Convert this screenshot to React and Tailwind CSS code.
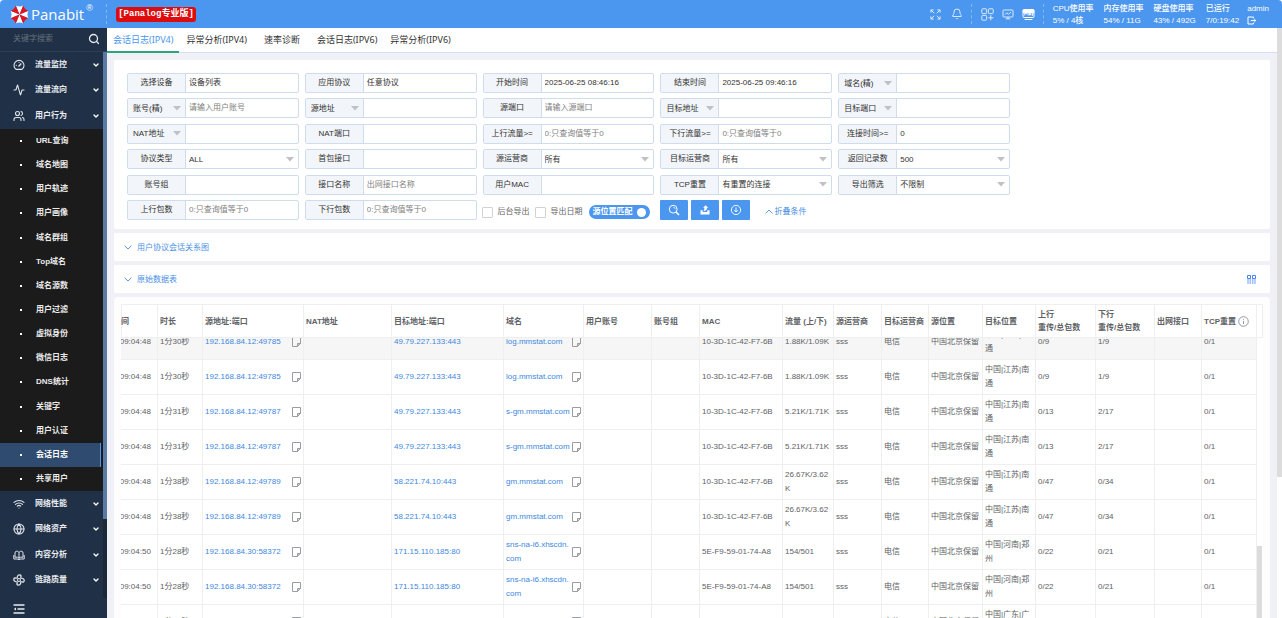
import React from "react";
import { ChevronDown, Activity, Users, Wifi, Globe, Search, Bell } from "lucide-react";

function GaugeIcon({ className }) {
  return (
    <svg viewBox="0 0 12 12" className={className} fill="none" stroke="currentColor" strokeWidth="1.1">
      <path d="M3 10.4A5 5 0 1 1 9 10.4z" strokeLinejoin="round" />
      <path d="M5.5 7.5 8.3 4.5" strokeWidth="1.4" />
      <path d="M2.8 6.4h.9M6 3v.8" />
    </svg>
  );
}

function BookIcon({ className }) {
  return (
    <svg viewBox="0 0 12 12" className={className} fill="none" stroke="currentColor" strokeWidth="1">
      <path d="M2 8.2V4a1.8 1.8 0 0 1 1.8-1.8c1.2 0 2.2.6 2.2 1.6 0-1 1-1.6 2.2-1.6A1.8 1.8 0 0 1 10 4v4.2" />
      <path d="M6 3.8v6M.8 6v4h3.4l1.8.6 1.8-.6h3.4V6M2 8.2h2.4L6 9l1.6-.8H10" />
    </svg>
  );
}

function LinkQualityIcon({ className }) {
  return (
    <svg viewBox="-6 -6 12 12" className={className} fill="none" stroke="currentColor" strokeWidth="1">
      <circle r="1.5" />
      {[0, 90, 180, 270].map((a) => (
        <path key={a} transform={`rotate(${a})`} d="M-1.8-1.2C-2.2-3-1.4-5 .4-5.2 2.2-5.3 2.6-3.6 1.4-2.6" strokeWidth="1.3" />
      ))}
    </svg>
  );
}

const groupsTop = [
  { name: "流量监控", Icon: GaugeIcon },
  { name: "流量流向", Icon: Activity },
  { name: "用户行为", Icon: Users },
];
const groupsBottom = [
  { name: "网络性能", Icon: Wifi },
  { name: "网络资产", Icon: Globe },
  { name: "内容分析", Icon: BookIcon },
  { name: "链路质量", Icon: LinkQualityIcon },
];
const subItems = [
  "URL查询", "域名地图", "用户轨迹", "用户画像", "域名群组", "Top域名", "域名源数", "用户过滤",
  "虚拟身份", "微信日志", "DNS统计", "关键字", "用户认证", "会话日志", "共享用户",
];
const tabs = ["会话日志(IPV4)", "异常分析(IPV4)", "速率诊断", "会话日志(IPV6)", "异常分析(IPV6)"];
const stats = [
  ["CPU使用率", "5% / 4核"],
  ["内存使用率", "54% / 11G"],
  ["硬盘使用率", "43% / 492G"],
  ["已运行", "7/0:19:42"],
];
const fields = [
  { label: "选择设备", value: "设备列表" },
  { label: "应用协议", value: "任意协议" },
  { label: "开始时间", value: "2025-06-25 08:46:16" },
  { label: "结束时间", value: "2025-06-25 09:46:16" },
  { label: "域名(精)", pick: true },
  { label: "账号(精)", pick: true, hint: "请输入用户账号" },
  { label: "源地址", pick: true },
  { label: "源端口", hint: "请输入源端口" },
  { label: "目标地址", pick: true },
  { label: "目标端口", pick: true },
  { label: "NAT地址", pick: true },
  { label: "NAT端口" },
  { label: "上行流量>=", hint: "0:只查询值等于0" },
  { label: "下行流量>=", hint: "0:只查询值等于0" },
  { label: "连接时间>=", value: "0" },
  { label: "协议类型", option: "ALL" },
  { label: "首包接口" },
  { label: "源运营商", option: "所有" },
  { label: "目标运营商", option: "所有" },
  { label: "返回记录数", option: "500" },
  { label: "账号组" },
  { label: "接口名称", hint: "出网接口名称" },
  { label: "用户MAC" },
  { label: "TCP重置", option: "有重置的连接" },
  { label: "导出筛选", option: "不限制" },
  { label: "上行包数", hint: "0:只查询值等于0" },
  { label: "下行包数", hint: "0:只查询值等于0" },
];
const columns = [
  { name: "开始时间", w: "w-[63px]" },
  { name: "时长", w: "w-[45px]" },
  { name: "源地址:端口", w: "w-[101px]" },
  { name: "NAT地址", w: "w-[88px]" },
  { name: "目标地址:端口", w: "w-[112px]" },
  { name: "域名", w: "w-[80px]" },
  { name: "用户账号", w: "w-[68px]" },
  { name: "账号组", w: "w-[48px]" },
  { name: "MAC", w: "w-[83px]" },
  { name: "流量 (上/下)", w: "w-[51px]" },
  { name: "源运营商", w: "w-[48px]" },
  { name: "目标运营商", w: "w-[47px]" },
  { name: "源位置", w: "w-[54px]" },
  { name: "目标位置", w: "w-[53px]" },
  { name: "上行", second: "重传/总包数", w: "w-[60px]" },
  { name: "下行", second: "重传/总包数", w: "w-[59px]" },
  { name: "出网接口", w: "w-[47px]" },
  { name: "TCP重置", info: true, w: "w-[55px]" },
];
const MAC_A = "10-3D-1C-42-F7-6B";
const MAC_B = "5E-F9-59-01-74-A8";
const rows = [
  ["09:04:48", "1分30秒", "192.168.84.12:49785", "49.79.227.133:443", "log.mmstat.com", MAC_A, "1.88K/1.09K", "中国|江苏|南通", "0/9", "1/9"],
  ["09:04:48", "1分30秒", "192.168.84.12:49785", "49.79.227.133:443", "log.mmstat.com", MAC_A, "1.88K/1.09K", "中国|江苏|南通", "0/9", "1/9"],
  ["09:04:48", "1分31秒", "192.168.84.12:49787", "49.79.227.133:443", "s-gm.mmstat.com", MAC_A, "5.21K/1.71K", "中国|江苏|南通", "0/13", "2/17"],
  ["09:04:48", "1分31秒", "192.168.84.12:49787", "49.79.227.133:443", "s-gm.mmstat.com", MAC_A, "5.21K/1.71K", "中国|江苏|南通", "0/13", "2/17"],
  ["09:04:48", "1分38秒", "192.168.84.12:49789", "58.221.74.10:443", "gm.mmstat.com", MAC_A, "26.67K/3.62K", "中国|江苏|南通", "0/47", "0/34"],
  ["09:04:48", "1分38秒", "192.168.84.12:49789", "58.221.74.10:443", "gm.mmstat.com", MAC_A, "26.67K/3.62K", "中国|江苏|南通", "0/47", "0/34"],
  ["09:04:50", "1分28秒", "192.168.84.30:58372", "171.15.110.185:80", "sns-na-i6.xhscdn.com", MAC_B, "154/501", "中国|河南|郑州", "0/22", "0/21"],
  ["09:04:50", "1分28秒", "192.168.84.30:58372", "171.15.110.185:80", "sns-na-i6.xhscdn.com", MAC_B, "154/501", "中国|河南|郑州", "0/22", "0/21"],
  ["09:04:50", "1分38秒", "192.168.84.30:58374", "171.15.110.185:80", "log.mmstat.com", MAC_B, "154/501", "中国|广东|广州", "0/22", "0/21"],
];

function Logo() {
  return (
    <svg viewBox="-10 -10 20 20" className="size-[19px] shrink-0" aria-hidden="true">
      <g fill="#fff">
        {[0, 90, 180, 270].map((a) => (
          <path key={a} transform={`rotate(${a})`} d="M0 0 L-3.9 -9.4 Q0 -7.4 3.9 -9.4Z" />
        ))}
      </g>
      <g fill="#e2141c">
        {[45, 135, 225, 315].map((a) => (
          <path key={a} transform={`rotate(${a})`} d="M0 0 L-3.9 -9.4 Q0 -7.4 3.9 -9.4Z" />
        ))}
      </g>
    </svg>
  );
}

function Caret() {
  return (
    <svg viewBox="0 0 8 5" className="pointer-events-none -ml-3 mr-[3px] h-[5px] w-2 shrink-0" aria-hidden="true">
      <path d="M0 0h8L4 4.6z" fill="#bfc1c4" />
    </svg>
  );
}

function Note() {
  return (
    <button type="button" aria-label="备注" className="shrink-0">
      <svg viewBox="0 0 9 10" className="h-[10px] w-[9px]" fill="none" stroke="#9a9da1" strokeWidth="1">
        <path d="M.5 .5h8v6l-3 3h-5z" />
        <path d="M8.5 6.5h-3v3z" fill="#9a9da1" fillOpacity=".4" />
      </svg>
    </button>
  );
}

function Field({ f, i }) {
  const id = `field-${i}`;
  return (
    <div className="flex h-5 overflow-hidden rounded-[2px] border border-[#cfdced] bg-white text-[8px] text-[#333]">
      {f.pick ? (
        <div className="flex w-[58px] shrink-0 items-center border-r border-[#cfdced] bg-[#f2f5f9]">
          <select aria-label={`${f.label} 条件`} className="h-full w-full appearance-none bg-transparent pl-[5px] pt-px outline-none">
            <option>{f.label}</option>
          </select>
          <Caret />
        </div>
      ) : (
        <label htmlFor={id} className="flex w-[58px] shrink-0 items-center justify-center border-r border-[#cfdced] bg-[#f2f5f9]">
          {f.label}
        </label>
      )}
      {f.option ? (
        <div className="flex min-w-0 flex-1 items-center">
          <select id={id} className="h-full w-full appearance-none bg-transparent pl-[3px] pt-px outline-none">
            <option>{f.option}</option>
          </select>
          <Caret />
        </div>
      ) : (
        <input
          id={id}
          aria-label={f.label}
          defaultValue={f.value}
          placeholder={f.hint}
          className="min-w-0 flex-1 bg-transparent px-[3px] outline-none placeholder:text-[#808080]"
        />
      )}
    </div>
  );
}

function Group({ name, Icon }) {
  return (
    <button type="button" className="flex items-center pl-[13px] pr-[3px] text-left">
      <Icon className="size-3 shrink-0 text-[#dfe4ea]" strokeWidth={2.2} />
      <span className="ml-[10px] flex-1 font-bold text-[#e8ebef]">{name}</span>
      <ChevronDown className="size-2 text-white" strokeWidth={4} />
    </button>
  );
}

function Sidebar() {
  return (
    <aside className="flex w-[107px] shrink-0 flex-col bg-[#203046] text-[8px]">
      <div className="flex h-6 shrink-0 items-center border-b border-[#2c3d54] pb-[2px] pl-[13px] pr-[7px]">
        <input aria-label="关键字搜索" placeholder="关键字搜索" className="min-w-0 flex-1 bg-transparent text-white outline-none placeholder:text-[#66707d]" />
        <button type="button" aria-label="搜索">
          <Search className="size-3 text-[#e4e8ec]" strokeWidth={2.6} />
        </button>
      </div>
      <div className="flex min-h-0 flex-1">
        <nav className="flex min-w-0 flex-1 flex-col">
          <div className="grid h-[77px] shrink-0 grid-rows-3">
            {groupsTop.map((g) => <Group key={g.name} {...g} />)}
          </div>
          <div className="grid h-[362px] shrink-0 grid-rows-15 bg-[#1b1b1b]">
            {subItems.map((s) => (
              <a
                key={s}
                href="#"
                className={
                  s === "会话日志"
                    ? "mr-[2px] flex items-center border-r border-[#4d97ee] bg-[#304b70] font-bold text-white"
                    : "flex items-center font-bold text-[#eaeaea]"
                }
              >
                <span className="ml-5 mr-[14px] size-[2px] bg-white" />
                {s}
              </a>
            ))}
          </div>
          <div className="grid h-[102px] shrink-0 grid-rows-4">
            {groupsBottom.map((g) => <Group key={g.name} {...g} />)}
          </div>
        </nav>
        <div className="h-[546px] w-1 bg-[#1b2837]">
          <div className="h-[467px] bg-[#5b7aa3]" />
        </div>
      </div>
      <button type="button" aria-label="收起菜单" className="mb-1 ml-[13px] w-3 shrink-0">
        <svg viewBox="0 0 12 10" className="h-[10px] w-3" stroke="#e8ebef" strokeWidth="1.3" fill="none">
          <path d="M.5 1h11M4.5 5h7M.5 9h11" />
          <path d="M3 3.4v3.2L.8 5z" fill="#e8ebef" stroke="none" />
        </svg>
      </button>
    </aside>
  );
}

function Header() {
  return (
    <header className="flex h-7 shrink-0 items-center rounded-t-[4px] bg-[#4b96ee] pl-[10px] pr-[13px] text-white">
      <Logo />
      <span className="ml-[2px] font-['Open_Sans',sans-serif] text-[15px] leading-5">Panabit</span>
      <span className="mb-3 ml-[2px] w-5 text-[9px] leading-3">®</span>
      <span className="h-5 w-0 border-l border-dashed border-[#86b7f3]" />
      <span className="ml-[9px] flex h-[15px] items-center rounded-[3px] bg-[#dc0c0f] px-[2px] pt-[2px] font-['Liberation_Mono','Noto_Sans_CJK_SC',monospace] text-[9px] font-bold">
        [Panalog专业版]
      </span>
      <div className="ml-auto flex items-center">
        <button type="button" aria-label="全屏" className="mr-[10px]">
          <svg viewBox="0 0 12 12" className="size-[11px]" fill="none" stroke="#e9f2fd" strokeWidth="1">
            <path d="M1 4V1h3M1 1l3.6 3.6M8 1h3v3M11 1 7.4 4.6M1 8v3h3M1 11l3.6-3.6M11 8v3H8M11 11 7.4 7.4" />
          </svg>
        </button>
        <button type="button" aria-label="通知" className="mr-2">
          <Bell className="size-3 text-[#e9f2fd]" strokeWidth={1.8} />
        </button>
        <span className="h-5 w-0 border-l border-dashed border-[#86b7f3]" />
        <button type="button" aria-label="应用" className="ml-[9px] mr-2">
          <svg viewBox="0 0 13 13" className="size-[13px]" fill="none" stroke="#dcebfc" strokeWidth="1">
            <rect x=".8" y=".8" width="4.8" height="4.8" rx=".8" />
            <rect x="7.4" y=".8" width="4.8" height="4.8" rx=".8" />
            <rect x=".8" y="7.4" width="4.8" height="4.8" rx=".8" />
            <path d="M9.8 7.2v5.2M7.2 9.8h5.2" />
          </svg>
        </button>
        <button type="button" aria-label="监控" className="mr-2">
          <svg viewBox="0 0 12 12" className="size-3" fill="none" stroke="#dcebfc" strokeWidth="1">
            <rect x="1" y="2" width="10" height="7" rx=".6" />
            <path d="M3 6.6l1.8-1.8 1.6 1.4L9 4.2M6 9v1.6M3.8 10.8h4.4" />
          </svg>
        </button>
        <button type="button" aria-label="Ping" className="mr-2">
          <svg viewBox="0 0 13 13" className="size-[13px]" fill="none" stroke="#fff" strokeWidth="1">
            <rect x="1" y="1.5" width="11" height="8" rx="1" />
            <path d="M1.2 2h10.6v2.6H1.2z" fill="#fff" />
            <path d="M2.8 7.4V5h1.6v1.2M6 5v2.4M7.4 7.4V5.2l1.4 2V5M10.4 5v2.8M2.6 11.5h7.8" />
          </svg>
        </button>
        <span className="h-5 w-0 border-l border-dashed border-[#86b7f3]" />
        <dl className="ml-[9px] flex gap-[10px] pt-px text-[8px] leading-3">
          {stats.map(([k, v]) => (
            <div key={k} className="whitespace-nowrap">
              <dt className="font-medium">{k}</dt>
              <dd className="font-medium">{v}</dd>
            </div>
          ))}
        </dl>
        <div className="ml-2 flex flex-col items-start pt-px text-[8px] leading-3">
          <span>admin</span>
          <button type="button" aria-label="退出" className="flex h-3 items-center">
            <svg viewBox="0 0 10 9" className="h-[9px] w-[10px]" fill="none" stroke="#fff" strokeWidth="1">
              <path d="M6.4 2.4V1H1v7h5.4V6.6M3.8 4.5h5M7.2 3l1.6 1.5L7.2 6" />
            </svg>
          </button>
        </div>
      </div>
    </header>
  );
}

function Toolbar() {
  const button = "flex h-5 w-7 items-center justify-center rounded-[1px] bg-[#4b96ee]";
  return (
    <>
      <div className="flex h-5 items-center whitespace-nowrap pt-[5px] text-[8px] text-[#666]">
        <label className="-ml-px flex items-center gap-[5px]">
          <input type="checkbox" className="size-[11px] appearance-none rounded-[1px] border border-[#d2d2d2] bg-white" />
          后台导出
        </label>
        <label className="ml-[5px] flex items-center gap-[5px]">
          <input type="checkbox" className="size-[11px] appearance-none rounded-[1px] border border-[#d2d2d2] bg-white" />
          导出日期
        </label>
        <button type="button" role="switch" aria-checked="true" className="ml-[6px] flex h-[14px] items-center gap-1 rounded-full bg-[#4b96ee] pl-1 pr-1 font-bold text-white">
          源位置匹配
          <span className="size-[9px] rounded-full bg-white" />
        </button>
      </div>
      <div className="flex h-5 items-center gap-[3px] whitespace-nowrap text-[8px]">
        <button type="button" aria-label="查询" className={button}>
          <svg viewBox="0 0 12 12" className="size-3" fill="none" stroke="#fff" strokeWidth="1">
            <circle cx="5.2" cy="5.2" r="3.9" />
            <path d="M8 8l3 3" strokeWidth="1.6" />
            <path d="M5.2 3.2a2 2 0 0 1 2 2" strokeWidth=".7" />
          </svg>
        </button>
        <button type="button" aria-label="导出" className={button}>
          <svg viewBox="0 0 12 12" className="size-3" fill="#fff">
            <path d="M6.6 1.2 9.4 3.8H8C8 6 6.6 7 4.4 7.2 5.200 6.200 5.400 5.200 5.400 3.800H4z" />
            <path d="M1.5 6.200h2.200v1.800h4.600V6.200h2.200v4.400h-9z" />
          </svg>
        </button>
        <button type="button" aria-label="下载" className={button}>
          <svg viewBox="0 0 12 12" className="size-3" fill="none" stroke="#fff" strokeWidth=".9">
            <circle cx="6" cy="6" r="4.6" />
            <path d="M6 3.4v4.4M4.2 6.2 6 8l1.8-1.8" />
          </svg>
        </button>
        <a href="#" className="ml-3 flex items-center gap-[1px] pt-1 text-[#4b90e6]">
          <svg viewBox="0 0 8 5" className="h-[5px] w-2" fill="none" stroke="#4b90e6" strokeWidth=".9">
            <path d="M.5 4.5 4 1l3.5 3.5" />
          </svg>
          折叠条件
        </a>
      </div>
    </>
  );
}

function Bar({ title, children }) {
  return (
    <section className="flex h-7 shrink-0 items-center bg-white pl-[10px] pr-[14px] pt-px text-[8px] text-[#4b90e6]">
      <button type="button" className="flex items-center gap-[5px]">
        <svg viewBox="0 0 8 5" className="h-[5px] w-2" fill="none" stroke="#4b90e6" strokeWidth=".9">
          <path d="M.5 .5 4 4l3.5-3.5" />
        </svg>
        {title}
      </button>
      {children}
    </section>
  );
}

function Cols() {
  return (
    <colgroup>
      {columns.map((c) => <col key={c.name} className={c.w} />)}
    </colgroup>
  );
}

const td = "border-r border-b border-[#efefef] px-[2px] py-0 align-middle";
const tableClass = "-ml-[26px] w-[calc(100%+26px)] table-fixed border-separate border-spacing-0 text-left text-[8px] text-[#606266]";

function LinkCell({ text, note }) {
  const cut = text.startsWith("sns") ? text.lastIndexOf(".") + 1 : text.length;
  return (
    <td className={td}>
      <div className="flex items-center justify-between">
        <a href="#" className="min-w-0 text-[#4088de]">
          {text.slice(0, cut)}<wbr />{text.slice(cut)}
        </a>
        {note && <Note />}
      </div>
    </td>
  );
}

function DataTable() {
  return (
    <section className="flex min-h-0 flex-1 flex-col overflow-hidden rounded-t-[4px] bg-[#fdfdfd] px-[7px] pt-[7px]">
      <div className="flex h-[34px] shrink-0 border-l border-t border-[#efefef] bg-white">
        <div className="-ml-px min-w-0 flex-1 overflow-hidden">
          <table className={`${tableClass} h-[33px] leading-[13px]`}>
            <Cols />
            <thead>
              <tr>
                {columns.map((c) => (
                  <th key={c.name} className={`${td} whitespace-nowrap font-bold`}>
                    {c.second ? (
                      <>{c.name}<br />{c.second}</>
                    ) : c.info ? (
                      <span className="flex items-center gap-[2px]">
                        {c.name}
                        <svg viewBox="0 0 11 11" className="size-[11px] shrink-0" fill="none" stroke="#7d8085" strokeWidth=".8">
                          <circle cx="5.5" cy="5.5" r="4.8" />
                          <path d="M5.5 4.8v3.2M5.5 2.8v1" />
                        </svg>
                      </span>
                    ) : c.name}
                  </th>
                ))}
              </tr>
            </thead>
          </table>
        </div>
        <div className="w-[6px] border-b border-r border-[#efefef]" />
      </div>
      <div className="flex min-h-0 flex-1">
        <div className="min-w-0 flex-1 overflow-hidden">
          <table className={`${tableClass} -mt-[13px] leading-[14px]`}>
            <Cols />
            <tbody>
              {rows.map(([time, span, src, dst, host, mac, flow, place, up, down], i) => (
                <tr key={i} className={i === 0 ? "h-[35px] bg-[#f6f6f6]" : "h-[35px] bg-white"}>
                  <td className={`${td} whitespace-nowrap`}>06-25 {time}</td>
                  <td className={td}>{span}</td>
                  <LinkCell text={src} note />
                  <td className={td} />
                  <LinkCell text={dst} />
                  <LinkCell text={host} note />
                  <td className={td} />
                  <td className={td} />
                  <td className={`${td} whitespace-nowrap`}>{mac}</td>
                  <td className={`${td} break-all`}>{flow}</td>
                  <td className={td}>sss</td>
                  <td className={td}>电信</td>
                  <td className={`${td} whitespace-nowrap`}>中国北京保留</td>
                  <td className={`${td} break-all`}>{place}</td>
                  <td className={td}>{up}</td>
                  <td className={td}>{down}</td>
                  <td className={td} />
                  <td className={td}>0/1</td>
                </tr>
              ))}
            </tbody>
          </table>
        </div>
        <div className="flex w-[6px] flex-col bg-white pt-[208px]">
          <div className="w-[5px] flex-1 bg-[#dcdcdc]" />
        </div>
      </div>
    </section>
  );
}

export default function App() {
  return (
    <div className="flex h-screen flex-col overflow-hidden bg-white font-['Liberation_Sans','Noto_Sans_CJK_SC',sans-serif]">
      <Header />
      <div className="flex min-h-0 flex-1">
        <Sidebar />
        <div className="flex min-w-0 flex-1 flex-col bg-[#eff1f6]">
          <nav className="flex h-[25px] shrink-0 gap-px border-b border-[#d3dfee] bg-white font-['Noto_Sans','Noto_Sans_CJK_SC',sans-serif] text-[9px] text-[#333]">
            {tabs.map((t, i) => (
              <a
                key={t}
                href="#"
                className={
                  i === 0
                    ? "-mb-px flex min-w-14 items-center justify-center border-b-2 border-b-[#2ba579] px-[6px] text-[#4b96ee]"
                    : "flex min-w-14 items-center justify-center px-[6px]"
                }
              >
                {t}
              </a>
            ))}
          </nav>
          <main className="flex min-h-0 flex-1 flex-col gap-1 px-[7px] pt-[7px]">
            <form className="shrink-0 rounded-[2px] bg-white px-[13px] pb-[9px] pt-[13px]">
              <div className="grid h-[147px] max-w-[883px] grid-cols-5 content-between gap-x-[6px]">
                {fields.map((f, i) => <Field key={f.label} f={f} i={i} />)}
                <Toolbar />
              </div>
            </form>
            <Bar title="用户协议会话关系图" />
            <Bar title="原始数据表">
              <button type="button" aria-label="列设置" className="ml-auto">
                <svg viewBox="0 0 9 9" className="size-[9px]" fill="none" stroke="#4b85f0" strokeWidth="1">
                  <path d="M.5 .5h3v3h-3zM5.5 .5h3v3h-3z" />
                  <path d="M1 4v5M3.2 4v5M5.8 4v5M8 4v5" strokeWidth=".8" />
                </svg>
              </button>
            </Bar>
            <DataTable />
          </main>
        </div>
        <div className="w-[5px] shrink-0 bg-white">
          <div className="h-[449px] bg-[#dcdcdc]" />
        </div>
      </div>
    </div>
  );
}
